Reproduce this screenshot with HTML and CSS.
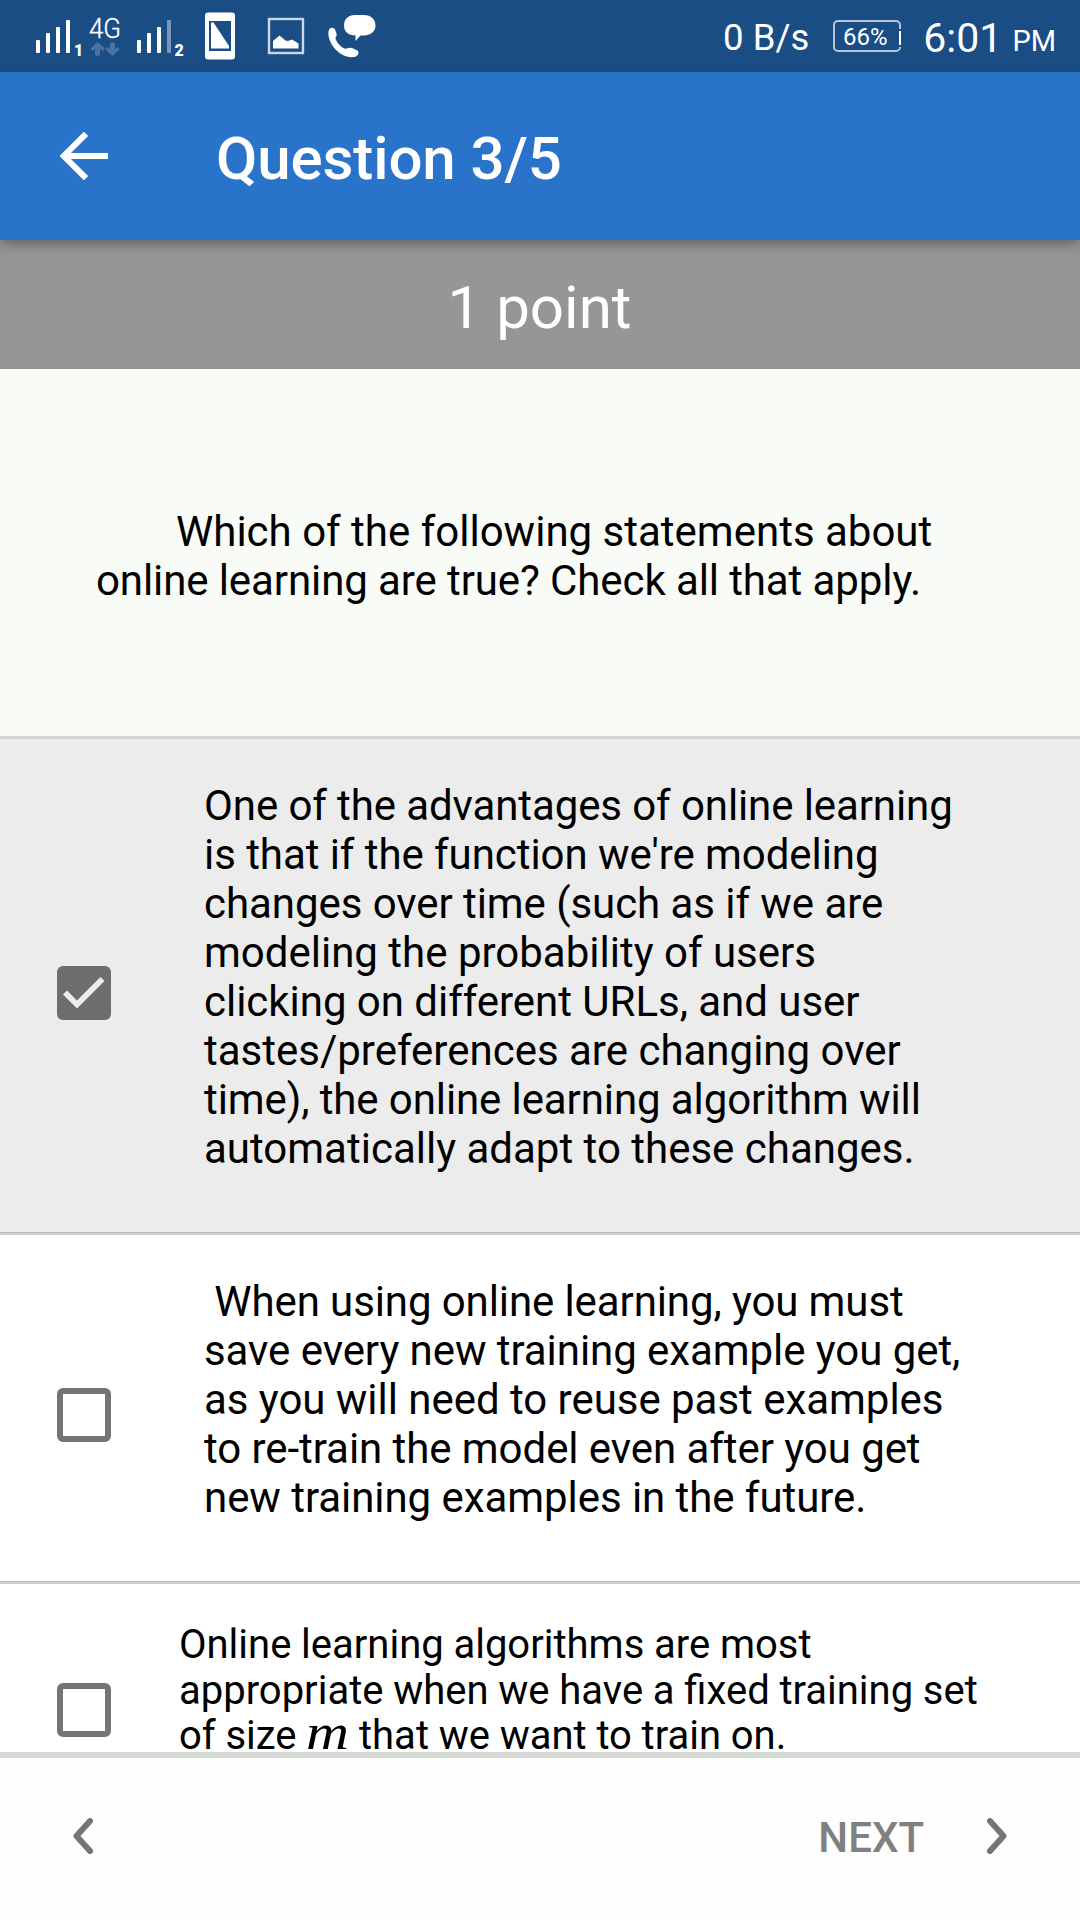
FILE: index.html
```html
<!DOCTYPE html>
<html lang="en">
<head>
<meta charset="utf-8">
<title>Question 3/5</title>
<link rel="stylesheet" href="styles.css">
</head>
<body>
<div class="screen">
  <div class="status">
    <svg class="status-icons" width="400" height="72" viewBox="0 0 400 72">
      <g fill="#fff">
        <rect x="36" y="40" width="4" height="13" rx="1"/>
        <rect x="46" y="33" width="4" height="20" rx="1"/>
        <rect x="56" y="27" width="4" height="26" rx="1"/>
        <rect x="66" y="20" width="4" height="33" rx="1"/>
        <rect x="137" y="40" width="4" height="13" rx="1"/>
        <rect x="147" y="33" width="4" height="20" rx="1"/>
        <rect x="157" y="27" width="4" height="26" rx="1"/>
        <rect x="167" y="20" width="4" height="33" rx="1" opacity=".42"/>
        <text class="sim" x="74" y="56">1</text>
        <text class="sim" x="174.500" y="56">2</text>
        <text class="net" x="89" y="38" textLength="32" lengthAdjust="spacingAndGlyphs">4G</text>
      </g>
      <g fill="#48729f">
        <path d="M97.500 42 L105 48.500 L103 51 L100 49 V54.500 Q97.500 57.500 95 54.500 V49 L92.500 51 L90.500 48.500Z"/>
        <path d="M112.500 56 L105.500 49.500 L107.500 47 L110 49 V43.500 Q112.500 40.500 115 43.500 V49 L117.500 47 L119.500 49.500Z"/>
      </g>
      <path fill="#fff" fill-rule="evenodd" d="M208 12.500h24a3 3 0 0 1 3 3v41a3 3 0 0 1-3 3h-24a3 3 0 0 1-3-3v-41a3 3 0 0 1 3-3zM209 21v30h22V21z"/>
      <path fill="#fff" d="M211 22.500h2.500L229 46v2.500h-18z"/>
      <rect x="269" y="19" width="34" height="34" fill="none" stroke="#cbd7e5" stroke-width="2.400"/>
      <path fill="#fff" d="M273 41l6.500-5.500 6 5 2.500.5 4-1.500 6.500 4V48.500H273z"/>
      <path fill="#fff" d="M329 29.500c1.500-2.500 5-2.500 6.200.3l1.300 3.700c.8 2.500-1.300 3.500-1 5 1.200 4 4.800 8 9 10 2 .8 3.500-1 5.500-.8 2.500.2 5 1.600 7.500 2.800 2 2 .7 5-2 6.200-8 2-16-2.500-21.500-9-4-5-7-12.500-5-18.200z"/>
      <path fill="#fff" d="M355 15h9c7 0 11.500 4.500 11.500 10.500S371 35 364 35.500h-3.500l-5 5.500v-5.500c-7.500-.2-11.500-4-11.500-10S348 15 355 15z"/>
    </svg>
    <div class="status-right">
      <span class="rate">0 B/s</span>
      <span class="battery">66%</span>
      <span class="clock">6:01</span>
      <span class="ampm">PM</span>
    </div>
  </div>
  <header class="appbar">
    <svg class="back" width="48" height="48" viewBox="0 0 48 48" fill="none" stroke="#fff" stroke-width="6"><path d="M26 1.800 3.800 24 26 46.200M4 24h44"/></svg>
    <h1 class="title">Question 3/5</h1>
  </header>
  <main class="content">
    <div class="points">1 point</div>
    <section class="question">
      <p class="question-text">Which of the following statements about<br><span class="snug-3">online learning are true? Check all that apply.</span></p>
    </section>
    <div class="option option-selected">
      <svg class="box" width="54" height="54" viewBox="0 0 54 54"><rect width="54" height="54" rx="6" fill="#6d6d6d"/><path d="M8 26.500 20 38.500 45.500 13" fill="none" stroke="#ececec" stroke-width="5.800"/></svg>
      <p class="text"><span class="snug-3">One of the advantages of online learning</span><br><span class="snug-2">is that if the function we're modeling</span><br><span class="snug-2">changes over time (such as if we are</span><br>modeling the probability of users<br><span class="snug-1">clicking on different URLs, and user</span><br>tastes/preferences are changing over<br><span class="snug-3">time), the online learning algorithm will</span><br>automatically adapt to these changes.</p>
    </div>
    <div class="option">
      <svg class="box" width="54" height="54" viewBox="0 0 54 54"><rect x="3" y="3" width="48" height="48" rx="3" fill="none" stroke="#757575" stroke-width="6"/></svg>
      <p class="text"><span class="snug-3">&nbsp;When using online learning, you must</span><br><span class="snug-2">save every new training example you get,</span><br><span class="snug-1">as you will need to reuse past examples</span><br><span class="snug-2">to re-train the model even after you get</span><br><span class="snug-2">new training examples in the future.</span></p>
    </div>
    <div class="option option-math">
      <svg class="box" width="54" height="54" viewBox="0 0 54 54"><rect x="3" y="3" width="48" height="48" rx="3" fill="none" stroke="#757575" stroke-width="6"/></svg>
      <p class="text text-math">Online learning algorithms are most<br>appropriate when we have a fixed training set<br>of size <i class="var">m</i> that we want to train on.</p>
    </div>
  </main>
  <nav class="pager">
    <svg class="chevron" width="20" height="36" viewBox="0 0 20 36"><path d="M17 3 3.500 18 17 33"/></svg>
    <div class="next">
      <span class="next-label">NEXT</span>
      <svg class="chevron" width="20" height="36" viewBox="0 0 20 36"><path d="M3 3 16.500 18 3 33"/></svg>
    </div>
  </nav>
</div>
</body>
</html>
```
FILE: styles.css
```css
* { box-sizing: border-box; }
body { margin: 0; font-family: Roboto, sans-serif; color: #000; background: #fff; }
p, h1 { margin: 0; font-weight: 400; }
.screen { width: 1080px; height: 1920px; display: flex; flex-direction: column; overflow: hidden; }
.status { height: 72px; flex: none; background: #1b4d85; display: flex; justify-content: space-between; color: #fff; }
.sim { font: 900 16px Roboto, sans-serif; }
.net { font: 300 27px Roboto, sans-serif; stroke: #fff; stroke-width: .3px; }
.status-right { display: flex; align-items: flex-start; padding-right: 24px; white-space: nowrap; }
.rate { font-size: 36.500px; line-height: 44px; margin-top: 16px; }
.battery { position: relative; font-size: 24px; line-height: 30px; width: 68px; height: 32px; border: 2px solid #b6c7dc; border-radius: 5px; text-align: center; margin: 20px 0 0 24px; padding-right: 4px; }
.battery::after { content: ""; position: absolute; right: -2px; top: 7px; width: 2px; height: 14px; background: #fff; border: solid #1b4d85; border-width: 2px 0; }
.clock { font-size: 41px; line-height: 48px; margin: 14px 0 0 22px; }
.ampm { font-size: 29px; line-height: 34px; margin: 24px 0 0 10px; }
.appbar { height: 168px; flex: none; background: #2a73cb; display: flex; align-items: center; padding: 0 60px; position: relative; z-index: 1; box-shadow: 0 5px 12px -1px rgba(0,0,0,.34); }
.title { color: #fff; font-size: 60px; font-weight: 500; line-height: 70px; margin-left: 108px; padding-top: 6px; white-space: nowrap; letter-spacing: -.1px; }
.content { height: 1512px; flex: none; overflow: hidden; }
.points { height: 129px; background: #969696; color: #fff; font-size: 60px; line-height: 70px; text-align: center; padding: 33px 1px 0 0; }
.question { height: 370px; background: #f9fbf6; border-bottom: 3px solid #d2d4d1; padding: 138px 96px 0; }
.question-text { font-size: 42px; line-height: 49px; text-indent: 80px; white-space: nowrap; }
.snug-1 { letter-spacing: -.03px; }
.snug-2 { letter-spacing: -.06px; }
.snug-3 { letter-spacing: -.1px; }
.option { display: grid; grid-template-columns: 54px 1fr; column-gap: 93px; align-items: center; padding: 42px 0 59px 57px; border-bottom: 3px solid; border-image: linear-gradient(to top, #d0d0d0 0 2px, #b8b8b8 2px) 3; }
.option-selected { background: #ececec; }
.box { margin-top: 31px; display: block; }
.option-selected .box { margin-top: 32px; }
.text { font-size: 42px; line-height: 49px; white-space: nowrap; }
.option-math { column-gap: 68px; padding-top: 38px; height: 238px; align-items: start; }
.option-math .box { margin-top: 61px; }
.text-math { font-size: 40px; line-height: 45.700px; word-spacing: -.2px; }
.var { display: inline-block; width: 43px; font-family: "Liberation Serif", serif; font-size: 50px; line-height: 1px; transform: scaleX(1.19); transform-origin: 0 0; }
.pager { flex: 1; border-top: 6px solid #d5d7d3; background: #fefefe; display: flex; align-items: center; justify-content: space-between; padding: 0 73px 6px; }
.chevron { fill: none; stroke: #757575; stroke-width: 6; stroke-linecap: round; stroke-linejoin: round; }
.next { display: flex; align-items: center; gap: 63px; }
.next-label { font-size: 42px; font-weight: 500; color: #808080; padding-top: 2px; }
```
